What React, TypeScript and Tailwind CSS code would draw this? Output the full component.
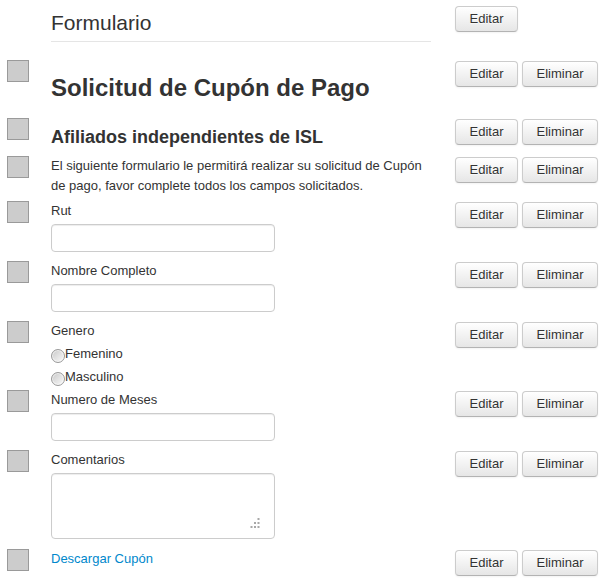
import type { ReactNode } from "react";

const font = { fontFamily: '"Liberation Sans", Arial, sans-serif' };

function Btn({ label, wide }: { label: string; wide?: boolean }) {
  return (
    <button
      type="button"
      className={`${wide ? "w-[76px]" : "w-[63px]"} h-[26px] rounded-[4px] border border-[#cccccc] border-b-[#b3b3b3] bg-gradient-to-b from-white to-[#e6e6e6] text-[13px] leading-[24px] text-[#333] shadow-[inset_0_1px_0_rgba(255,255,255,0.2),0_1px_2px_rgba(0,0,0,0.05)] [text-shadow:0_1px_1px_rgba(255,255,255,0.75)]`}
    >
      {label}
    </button>
  );
}

function Row({
  h,
  square = true,
  remove = true,
  children,
}: {
  h: string;
  square?: boolean;
  remove?: boolean;
  children: ReactNode;
}) {
  return (
    <div className={`flex items-start pl-[7px] ${h}`}>
      {square ? (
        <div className="w-[22px] h-[22px] shrink-0 bg-[#cccccc] border border-[#9a9a9a]" />
      ) : (
        <div className="w-[22px] shrink-0" />
      )}
      <div className="ml-[22px] w-[380px] shrink-0">{children}</div>
      <div className="ml-[24px] mt-[1px] flex gap-[4px]">
        <Btn label="Editar" />
        {remove && <Btn label="Eliminar" wide />}
      </div>
    </div>
  );
}

function Label({ children }: { children: ReactNode }) {
  return <div className="text-[13px] leading-[20px] text-[#333]">{children}</div>;
}

function Input() {
  return (
    <input
      type="text"
      className="mt-[3px] block w-[224px] h-[28px] rounded-[4px] border border-[#cccccc] bg-white px-[6px] text-[13px] shadow-[inset_0_1px_1px_rgba(0,0,0,0.075)] outline-none"
    />
  );
}

function Radio({ label }: { label: string }) {
  return (
    <div className="flex items-start h-[23px]">
      <span className="mt-[8px] w-[14px] h-[14px] shrink-0 rounded-full border border-[#999] bg-gradient-to-br from-[#c8c8c8] via-[#e2e2e2] to-[#fafafa] shadow-[inset_0_0_0_1px_rgba(255,255,255,0.6)]" />
      <span className="text-[13px] leading-[20px] text-[#333] mt-[3px]">{label}</span>
    </div>
  );
}

export default function App() {
  return (
    <div className="bg-white w-[605px] h-[586px] pt-[5px] overflow-hidden text-[#333]" style={font}>
      <Row h="h-[55px]" square={false} remove={false}>
        <div className="mt-[3px] pb-[3px] border-b border-[#e5e5e5] text-[21px] leading-[30px] text-[#333]">
          Formulario
        </div>
      </Row>
      <Row h="h-[58px]">
        <h3 className="mt-[8px] text-[24px] leading-[40px] font-bold text-[#333]">
          Solicitud de Cupón de Pago
        </h3>
      </Row>
      <Row h="h-[38px]">
        <h4 className="mt-[9px] text-[18px] leading-[20px] font-bold text-[#333]">
          Afiliados independientes de ISL
        </h4>
      </Row>
      <Row h="h-[45px]">
        <p className="text-[13px] leading-[20px] text-[#333]">
          El siguiente formulario le permitirá realizar su solicitud de Cupón de pago, favor
          complete todos los campos solicitados.
        </p>
      </Row>
      <Row h="h-[60px]">
        <Label>Rut</Label>
        <Input />
      </Row>
      <Row h="h-[60px]">
        <Label>Nombre Completo</Label>
        <Input />
      </Row>
      <Row h="h-[69px]">
        <Label>Genero</Label>
        <Radio label="Femenino" />
        <Radio label="Masculino" />
      </Row>
      <Row h="h-[60px]">
        <Label>Numero de Meses</Label>
        <Input />
      </Row>
      <Row h="h-[99px]">
        <Label>Comentarios</Label>
        <div className="relative mt-[3px] w-[224px] h-[66px]">
          <textarea className="block w-full h-full resize-none rounded-[4px] border border-[#cccccc] bg-white shadow-[inset_0_1px_1px_rgba(0,0,0,0.075)] outline-none" />
          <svg className="absolute left-[199px] top-[44px]" width="12" height="12" viewBox="0 0 12 12">
            <g fill="#a8a8a8">
              <rect x="7.5" y="1" width="2" height="2" />
              <rect x="4" y="5" width="2" height="2" />
              <rect x="7.5" y="5" width="2" height="2" />
              <rect x="0.5" y="9" width="2" height="2" />
              <rect x="4" y="9" width="2" height="2" />
              <rect x="7.5" y="9" width="2" height="2" />
            </g>
          </svg>
        </div>
      </Row>
      <Row h="h-[37px]">
        <a href="#" className="block text-[13px] leading-[20px] text-[#0088cc]">
          Descargar Cupón
        </a>
      </Row>
    </div>
  );
}
